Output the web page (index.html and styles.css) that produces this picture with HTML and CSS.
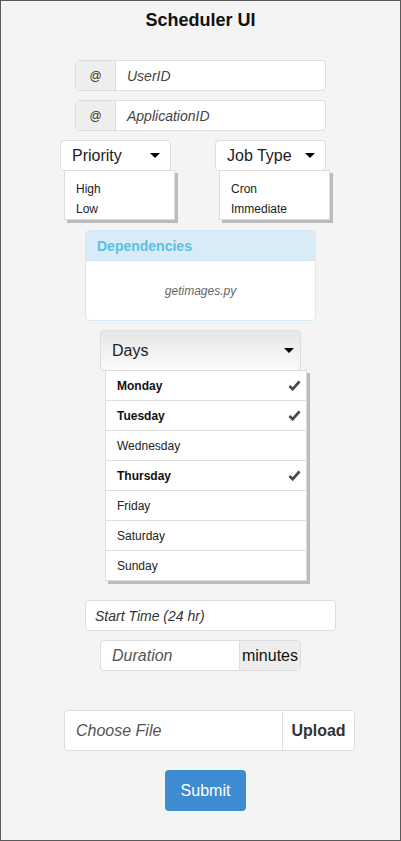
FILE: index.html
```html
<!DOCTYPE html>
<html lang="en">
<head>
  <meta charset="UTF-8">
  <meta name="viewport" content="width=device-width, initial-scale=1.0">
  <title>Scheduler UI</title>
  <link rel="stylesheet" href="styles.css">
</head>
<body>
  <div class="app">
    <h1>Scheduler UI</h1>

    <div class="input-group id-group user-id">
      <span class="addon">@</span>
      <span class="field">UserID</span>
    </div>
    <div class="input-group id-group app-id">
      <span class="addon">@</span>
      <span class="field">ApplicationID</span>
    </div>

    <div class="select-row">
      <div class="select">
        <div class="select-btn">Priority <span class="caret"></span></div>
        <ul class="menu">
          <li>High</li>
          <li>Low</li>
        </ul>
      </div>
      <div class="select">
        <div class="select-btn">Job Type <span class="caret"></span></div>
        <ul class="menu">
          <li>Cron</li>
          <li>Immediate</li>
        </ul>
      </div>
    </div>

    <div class="panel">
      <div class="panel-heading">Dependencies</div>
      <div class="panel-body">getimages.py</div>
    </div>

    <div class="days">
      <div class="days-btn">Days <span class="caret"></span></div>
      <ul class="days-list">
        <li class="checked">Monday <svg class="check" viewBox="0 0 14 12"><path d="M1.5 6.5 L5 10 L12.5 1.5" /></svg></li>
        <li class="checked">Tuesday <svg class="check" viewBox="0 0 14 12"><path d="M1.5 6.5 L5 10 L12.5 1.5" /></svg></li>
        <li>Wednesday</li>
        <li class="checked">Thursday <svg class="check" viewBox="0 0 14 12"><path d="M1.5 6.5 L5 10 L12.5 1.5" /></svg></li>
        <li>Friday</li>
        <li>Saturday</li>
        <li>Sunday</li>
      </ul>
    </div>

    <div class="text-input start-time">Start Time (24 hr)</div>

    <div class="input-group duration">
      <span class="field">Duration</span>
      <span class="addon">minutes</span>
    </div>

    <div class="input-group file-group">
      <span class="field">Choose File</span>
      <span class="addon">Upload</span>
    </div>

    <button class="submit">Submit</button>
  </div>
</body>
</html>
```

FILE: styles.css
```css
* {
  margin: 0;
  padding: 0;
  box-sizing: border-box;
}

body {
  font-family: 'Liberation Sans', Arial, sans-serif;
  color: #222;
  background: #f4f4f4;
}

.app {
  width: 401px;
  height: 841px;
  border: 1px solid #5a5a5a;
  background: #f4f4f4;
  padding-top: 7px;
  display: flex;
  flex-direction: column;
  align-items: flex-start;
}

h1 {
  align-self: stretch;
  text-align: center;
  font-size: 18px;
  line-height: 24px;
  font-weight: 700;
  color: #111;
}

/* input groups */
.input-group {
  display: flex;
  background: #fff;
  border: 1px solid #ddd;
  border-radius: 4px;
  overflow: hidden;
}

.input-group .addon {
  display: flex;
  align-items: center;
  justify-content: center;
  background: #eee;
}

.input-group .field {
  flex: 1;
  display: flex;
  align-items: center;
  font-style: italic;
  color: #444;
}

.id-group {
  width: 251px;
  height: 31px;
  margin-left: 74px;
}

.user-id {
  margin-top: 28px;
}

.app-id {
  margin-top: 9px;
}

.id-group .addon {
  width: 40px;
  border-right: 1px solid #ddd;
  font-size: 12px;
  color: #333;
}

.id-group .field {
  font-size: 14px;
  padding-left: 11px;
}

/* priority / job type */
.select-row {
  display: flex;
  gap: 40px;
  margin-top: 9px;
  margin-left: 59px;
}

.select-btn {
  width: 111px;
  height: 31px;
  background: #fff;
  border: 1px solid #ddd;
  border-radius: 4px;
  display: flex;
  align-items: center;
  justify-content: space-between;
  padding: 0 10px 0 11px;
  font-size: 16px;
  color: #222;
}

.caret {
  width: 0;
  height: 0;
  border-left: 5px solid transparent;
  border-right: 5px solid transparent;
  border-top: 5px solid #000;
}

.menu {
  list-style: none;
  width: 111px;
  margin-left: 4px;
  margin-top: -1px;
  background: #fff;
  border: 1px solid #ddd;
  box-shadow: 3px 3px 0 #bbb;
  padding: 8px 0 0;
}

.menu li {
  font-size: 12px;
  line-height: 20px;
  padding-left: 11px;
  color: #222;
}

/* dependencies */
.panel {
  width: 231px;
  margin-top: 10px;
  margin-left: 84px;
  border: 1px solid #d4e8f5;
  border-radius: 4px;
  background: #fff;
  overflow: hidden;
}

.panel-heading {
  height: 30px;
  background: #d9ebf7;
  border-bottom: 1px solid #cfe5f3;
  display: flex;
  align-items: center;
  padding-left: 11px;
  font-size: 14px;
  font-weight: 700;
  color: #5bc0de;
}

.panel-body {
  height: 59px;
  display: flex;
  align-items: center;
  justify-content: center;
  font-size: 12px;
  font-style: italic;
  color: #666;
}

/* days */
.days {
  margin-top: 9px;
  margin-left: 99px;
}

.days-btn {
  width: 201px;
  height: 41px;
  border: 1px solid #ddd;
  border-radius: 4px;
  background: linear-gradient(to bottom, #e6e6e6, #fbfbfb);
  display: flex;
  align-items: center;
  justify-content: space-between;
  padding: 0 6px 0 11px;
  font-size: 16px;
  color: #222;
}

.days-list {
  list-style: none;
  width: 202px;
  margin-left: 5px;
  margin-top: -1px;
  background: #fff;
  border: 1px solid #ddd;
  box-shadow: 3px 3px 0 #bbb;
}

.days-list li {
  height: 30px;
  display: flex;
  align-items: center;
  justify-content: space-between;
  padding: 0 5px 0 11px;
  font-size: 12px;
  color: #222;
  border-top: 1px solid #ddd;
}

.days-list li:first-child {
  border-top: none;
  height: 29px;
}

.days-list li.checked {
  font-weight: 700;
  color: #111;
}

.check {
  width: 13px;
  height: 11px;
  fill: none;
  stroke: #4a4a4a;
  stroke-width: 3;
}

/* start time, duration */
.text-input {
  background: #fff;
  border: 1px solid #ddd;
  border-radius: 4px;
  display: flex;
  align-items: center;
  font-style: italic;
}

.start-time {
  width: 251px;
  height: 31px;
  margin-top: 19px;
  margin-left: 84px;
  padding-left: 9px;
  font-size: 14px;
  color: #333;
}

.duration {
  width: 201px;
  height: 31px;
  margin-top: 9px;
  margin-left: 99px;
}

.duration .field {
  font-size: 16px;
  color: #555;
  padding-left: 11px;
}

.duration .addon {
  width: 61px;
  font-size: 16px;
  color: #111;
  border-left: 1px solid #ddd;
}

/* file upload */
.file-group {
  width: 291px;
  height: 41px;
  margin-top: 39px;
  margin-left: 63px;
}

.file-group .field {
  font-size: 16px;
  color: #555;
  padding-left: 11px;
}

.file-group .addon {
  width: 72px;
  background: #fff;
  border-left: 1px solid #ddd;
  font-size: 16px;
  font-weight: 700;
  color: #333;
}

.submit {
  margin-top: 19px;
  margin-left: 164px;
  width: 81px;
  height: 41px;
  border: none;
  border-radius: 4px;
  background: #3d8bd0;
  color: #fff;
  font-family: 'Liberation Sans', Arial, sans-serif;
  font-size: 16px;
}
```
